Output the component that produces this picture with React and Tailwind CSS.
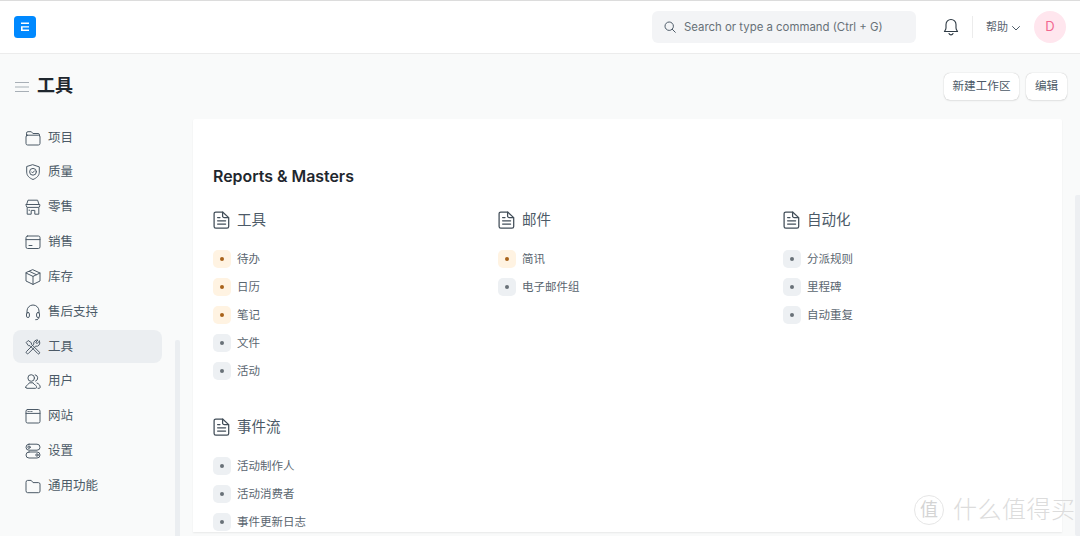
import React from "react";

const FONT = "font-['Inter','Noto_Sans_CJK_SC','Noto_Sans',sans-serif]";

const S = { fill: "none", stroke: "#4c5a67", strokeWidth: 1, strokeLinecap: "round", strokeLinejoin: "round" };

const icons = {
  folderOpen: (
    <g {...S}><path d="M2.500 7V4.200a1.500 1.500 0 0 1 1.500-1.500h3.300l1.600 1.800H14a1.500 1.500 0 0 1 1.500 1.500V7" /><rect x="2" y="6.200" width="14" height="9.800" rx="1.600" /></g>
  ),
  shield: (
    <g {...S}><path d="M9 1.800l6.300 2.100v5.200c0 3.800-2.900 6-6.300 7.400-3.400-1.400-6.300-3.600-6.300-7.400V3.900z" /><circle cx="9" cy="8.800" r="3.400" /><path d="M7.600 8.900l1 1 1.800-2" /></g>
  ),
  store: (
    <g {...S}><path d="M4.400 2.200h9.200l1.400 4.300H3z" /><path d="M2.200 6.500h13.600v1.400a1.600 1.600 0 0 1-1.600 1.500H3.800a1.600 1.600 0 0 1-1.600-1.500z" /><path d="M3.200 9.600v6.600h4v-3.800h3.600v3.800h4V9.600" /><path d="M5 12.200h.6" /></g>
  ),
  card: (
    <g {...S}><rect x="2" y="3" width="14" height="12.500" rx="1.600" /><path d="M2 6.600h14" /><path d="M5 12.500h3" /></g>
  ),
  box: (
    <g {...S}><path d="M9 1.800l7 3.200v8l-7 3.400-7-3.400V5z" /><path d="M2 5l7 3.400L16 5" /><path d="M9 8.400v8" /><path d="M5.400 3.400l7 3.300" /></g>
  ),
  headset: (
    <g {...S}><path d="M3 10V8a6 6 0 0 1 12 0v2" /><rect x="2.500" y="9.500" width="2.900" height="5" rx="1.400" /><rect x="12.600" y="9.500" width="2.900" height="5" rx="1.400" /><path d="M15 14.500c0 1.500-1.300 2.200-3.300 2.200" /></g>
  ),
  tools: (
    <g {...S}><path d="M2.500 4.200l1.700-1.700 3.200 2.300v1.400l7.900 7.900a1 1 0 0 1 0 1.500 1 1 0 0 1-1.500 0L6 7.700H4.800z" /><path d="M15.400 3.200l-2.200 2.200-1-.3-.4-1 2.200-2a3.400 3.400 0 0 0-4.200 4.100L2.600 13.400a1.300 1.300 0 0 0 0 1.900 1.300 1.300 0 0 0 1.900 0l7.200-7.100a3.400 3.400 0 0 0 3.700-5z" /></g>
  ),
  users: (
    <g {...S}><circle cx="7.200" cy="6" r="3.300" /><path d="M1.800 15.300c0-1.200.7-1.900 1.700-2.500.9-.5 1.500-1.100 1.800-2h3.800c.3.900.9 1.500 1.800 2 1 .6 1.700 1.300 1.700 2.500 0 .6-.4 1-1 1H2.800c-.6 0-1-.4-1-1z" /><path d="M11.200 2.800a3.300 3.300 0 0 1 .4 6.300" /><path d="M13 11c2 .7 3.200 2.300 3.200 4.300 0 .6-.4 1-1 1h-1.200" /></g>
  ),
  browser: (
    <g {...S}><rect x="2" y="2.500" width="14" height="13.500" rx="1.600" /><path d="M2 6.400h14" /><path d="M4 4.500h.4M5.800 4.500h.4M7.600 4.500h.4" /></g>
  ),
  toggles: (
    <g {...S}><rect x="2" y="2.200" width="14" height="6" rx="3" /><rect x="2" y="10" width="14" height="6" rx="3" /><circle cx="5" cy="5.200" r="1.200" /><circle cx="13" cy="13" r="1.200" /></g>
  ),
  folder: (
    <g {...S}><path d="M2 5a1.600 1.600 0 0 1 1.600-1.600h3.600l1.800 2.200h5.400A1.600 1.600 0 0 1 16 7.200v6.900a1.600 1.600 0 0 1-1.600 1.600H3.600A1.600 1.600 0 0 1 2 14.100z" /></g>
  ),
};

const nav = [
  ["项目", "folderOpen"],
  ["质量", "shield"],
  ["零售", "store"],
  ["销售", "card"],
  ["库存", "box"],
  ["售后支持", "headset"],
  ["工具", "tools", true],
  ["用户", "users"],
  ["网站", "browser"],
  ["设置", "toggles"],
  ["通用功能", "folder"],
];

function DocIcon() {
  return (
    <svg width="18" height="18" viewBox="0 0 18 18" className="shrink-0">
      <g fill="none" stroke="#414d58" strokeWidth="1.250" strokeLinecap="round" strokeLinejoin="round">
        <path d="M2.800 1h6.800l6.100 5.600v8.800a1.700 1.700 0 0 1-1.700 1.700H2.800a1.700 1.700 0 0 1-1.700-1.700V2.700A1.700 1.700 0 0 1 2.800 1z" />
        <path d="M9.600 1.200v3.700a1.700 1.700 0 0 0 1.700 1.700h4.200" />
        <path d="M4.600 9.800h8M4.600 13h8M4.600 6.600h2.400" />
      </g>
    </svg>
  );
}

function Item({ label, warm }) {
  return (
    <div className="flex h-[18px] items-center gap-[6px]">
      <span className={`flex h-[18px] w-[18px] shrink-0 items-center justify-center rounded-[5px] ${warm ? "bg-[#fff3e2]" : "bg-[#edf0f3]"}`}>
        <span className={`h-[4px] w-[4px] rounded-full ${warm ? "bg-[#a8631a]" : "bg-[#687178]"}`} />
      </span>
      <span className="text-[11.500px] leading-[18px] text-[#5a6670]">{label}</span>
    </div>
  );
}

function Group({ title, items }) {
  return (
    <div className="w-[285px] shrink-0">
      <div className="flex h-[18px] items-center gap-[6px]">
        <DocIcon />
        <span className="text-[14.500px] leading-[18px] text-[#4c5a67]">{title}</span>
      </div>
      <div className="mt-[21px] flex flex-col gap-[10px]">
        {items.map(([l, w]) => (
          <Item key={l} label={l} warm={w} />
        ))}
      </div>
    </div>
  );
}

export default function App() {
  return (
    <div className={`flex h-[536px] w-[1080px] flex-col overflow-hidden bg-[#f9fafa] ${FONT}`}>
      <header className="flex h-[54px] shrink-0 items-center border-t border-b border-t-[#dcdcdc] border-b-[#ececec] bg-white pl-[14px] pr-[14px]">
        <svg width="22" height="22" viewBox="0 0 22 22" className="shrink-0">
          <rect width="22" height="22" rx="3.500" fill="#0089ff" />
          <path d="M7 6.500h8v1.600H7zM7 10.200h8v1.400H8.600v1.900H15v1.600H7z" fill="#fff" />
        </svg>
        <div className="ml-[616px] flex h-[32px] w-[264px] shrink-0 items-center rounded-[6px] bg-[#f3f4f6] pl-[12px]">
          <svg width="12" height="12" viewBox="0 0 12 12" className="mt-[-1px]">
            <circle cx="5.200" cy="5.200" r="4.200" fill="none" stroke="#4c5a67" strokeWidth="1" />
            <path d="M8.300 8.300l3 3" stroke="#4c5a67" strokeWidth="1" strokeLinecap="round" />
          </svg>
          <span className="ml-[8px] whitespace-nowrap text-[11.400px] leading-[18px] text-[#687178]">Search or type a command (Ctrl + G)</span>
        </div>
        <svg width="16" height="18" viewBox="0 0 16 18" className="ml-[27px] shrink-0">
          <path d="M8 1.500a5 5 0 0 0-5 5v3.600c0 1.500-.9 2.500-1.600 3.400h13.200c-.7-.9-1.600-1.900-1.600-3.400V6.500a5 5 0 0 0-5-5z" fill="none" stroke="#2e3a44" strokeWidth="1.100" strokeLinejoin="round" />
          <path d="M6 15.500c.4 1 1.100 1.400 2 1.400s1.600-.4 2-1.400" fill="none" stroke="#2e3a44" strokeWidth="1.100" strokeLinecap="round" />
        </svg>
        <div className="ml-[13px] h-[22px] w-px shrink-0 bg-[#ececec]" />
        <span className="ml-[13px] whitespace-nowrap text-[11px] leading-[18px] text-[#5a6670]">帮助</span>
        <svg width="10" height="10" viewBox="0 0 10 10" className="ml-[3px] mt-[2px] shrink-0">
          <path d="M1.500 3.500L5 7l3.500-3.500" fill="none" stroke="#4c5a67" strokeWidth="1" strokeLinecap="round" strokeLinejoin="round" />
        </svg>
        <div className="ml-[13px] flex h-[32px] w-[32px] shrink-0 items-center justify-center rounded-full bg-[#ffe6ee] text-[13px] text-[#f2668f]">D</div>
      </header>

      <div className="flex h-[65px] shrink-0 items-center justify-between pl-[15px] pr-[13px]">
        <div className="flex items-center gap-[9px]">
          <svg width="14" height="12" viewBox="0 0 14 12" className="mt-[1px]">
            <path d="M0 1.500h14M0 6h14M0 10.500h14" stroke="#a8afb6" strokeWidth="1.200" />
          </svg>
          <span className="ml-[-1px] mt-[-1px] text-[18px] font-bold leading-[26px] text-[#1f272e]">工具</span>
        </div>
        <div className="flex gap-[7px]">
          <button className="flex h-[27px] w-[75px] items-center justify-center rounded-[6px] bg-white pt-px text-[11.600px] text-[#4c5a67] shadow-[0_0_1px_rgba(0,0,0,0.3),0_1px_2px_rgba(0,0,0,0.08)]">新建工作区</button>
          <button className="flex h-[27px] w-[41px] items-center justify-center rounded-[6px] bg-white pt-px text-[11.600px] text-[#4c5a67] shadow-[0_0_1px_rgba(0,0,0,0.3),0_1px_2px_rgba(0,0,0,0.08)]">编辑</button>
        </div>
      </div>

      <div className="flex min-h-0 flex-1">
        <aside className="relative w-[193px] shrink-0 pl-[13px] pt-[2px]">
          <nav className="flex w-[149px] flex-col gap-[1.850px]">
            {nav.map(([label, icon, active]) => (
              <div key={label} className={`flex h-[33px] items-center rounded-[8px] pl-[11px] ${active ? "bg-[#ebeef1]" : ""}`}>
                <svg width="18" height="18" viewBox="0 0 18 18" className="shrink-0">
                  {icons[icon]}
                </svg>
                <span className="ml-[6px] text-[12.500px] leading-[18px] text-[#4c5a67]">{label}</span>
              </div>
            ))}
          </nav>
          <div className="absolute left-[175px] top-[221px] h-[200px] w-[5px] rounded-t-[2px] bg-[#ebeef1]" />
        </aside>

        <main className="h-[413px] w-[869px] shrink-0 rounded-t-[2px] bg-white pl-[20px] pt-[48px] shadow-[0_1px_2px_rgba(0,0,0,0.07)]">
          <h2 className="text-[15.900px] font-semibold leading-[20px] text-[#1f272e]">Reports &amp; Masters</h2>
          <div className="mt-[24px] flex">
            <Group title="工具" items={[["待办", 1], ["日历", 1], ["笔记", 1], ["文件"], ["活动"]]} />
            <Group title="邮件" items={[["简讯", 1], ["电子邮件组"]]} />
            <Group title="自动化" items={[["分派规则"], ["里程碑"], ["自动重复"]]} />
          </div>
          <div className="mt-[38px]">
            <Group title="事件流" items={[["活动制作人"], ["活动消费者"], ["事件更新日志"]]} />
          </div>
        </main>
      </div>

      <div className="absolute right-0 top-[195px] h-[341px] w-[5px] rounded-l-[2px] bg-[#edeff2]" />

      <div className="absolute left-[914px] top-[495px] flex items-center gap-[9px] text-[#dcdcdc]">
        <span className="flex h-[30px] w-[30px] items-center justify-center rounded-full border border-[#e6e6e6] text-[18px] leading-none text-[#d4d4d4]">值</span>
        <span className="text-[24px] font-light leading-[30px] tracking-[0.500px]">什么值得买</span>
      </div>
    </div>
  );
}
